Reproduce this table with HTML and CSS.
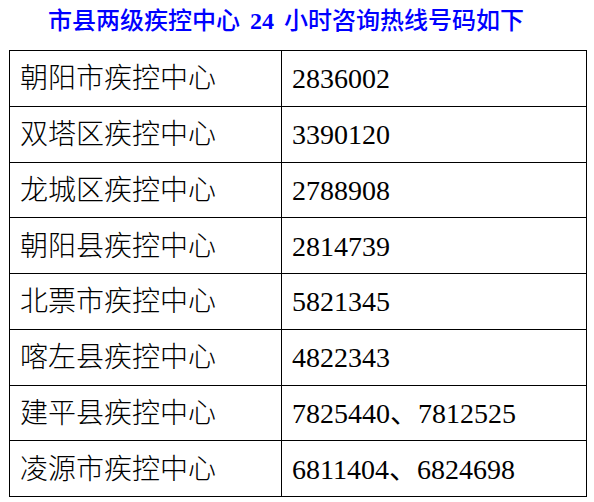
FILE: index.html
```html
<!DOCTYPE html>
<html lang="zh-CN">
<head>
<meta charset="utf-8">
<title>市县两级疾控中心24小时咨询热线号码</title>
<link rel="stylesheet" href="styles.css">
</head>
<body>
<div class="page">
  <h1 class="title">市县两级疾控中心 <span class="title-num">24</span> 小时咨询热线号码如下</h1>
  <table class="hotlines">
    <colgroup><col class="col-name"><col class="col-num"></colgroup>
    <tbody>
      <tr><td class="name">朝阳市疾控中心</td><td class="num">2836002</td></tr>
      <tr><td class="name">双塔区疾控中心</td><td class="num">3390120</td></tr>
      <tr><td class="name">龙城区疾控中心</td><td class="num">2788908</td></tr>
      <tr><td class="name">朝阳县疾控中心</td><td class="num">2814739</td></tr>
      <tr><td class="name">北票市疾控中心</td><td class="num">5821345</td></tr>
      <tr><td class="name">喀左县疾控中心</td><td class="num">4822343</td></tr>
      <tr><td class="name">建平县疾控中心</td><td class="num">7825440、7812525</td></tr>
      <tr><td class="name">凌源市疾控中心</td><td class="num">6811404、6824698</td></tr>
    </tbody>
  </table>
</div>
</body>
</html>
```
FILE: styles.css
```css
html, body {
  margin: 0;
  padding: 0;
  background: #ffffff;
}

.page {
  padding: 0 0 0 9px;
  font-family: "Liberation Serif", "Noto Sans CJK SC", serif;
  color: #000000;
}

.title {
  margin: 9px 0 17px 39px;
  font-size: 24px;
  line-height: 24px;
  font-weight: 500;
  color: #0000ff;
  word-spacing: 4px;
  white-space: nowrap;
}

.title-num {
  font-weight: bold;
}

.hotlines {
  border-collapse: collapse;
  table-layout: fixed;
  width: 577px;
}

.col-name { width: 272px; }
.col-num { width: 305px; }

.hotlines tr {
  height: 55.75px;
}

.hotlines td {
  border: 1px solid #000000;
  padding: 2px 0 0 10px;
  font-size: 28px;
  line-height: 30px;
  vertical-align: middle;
  white-space: nowrap;
}

.name {
  font-weight: 300;
}
```
